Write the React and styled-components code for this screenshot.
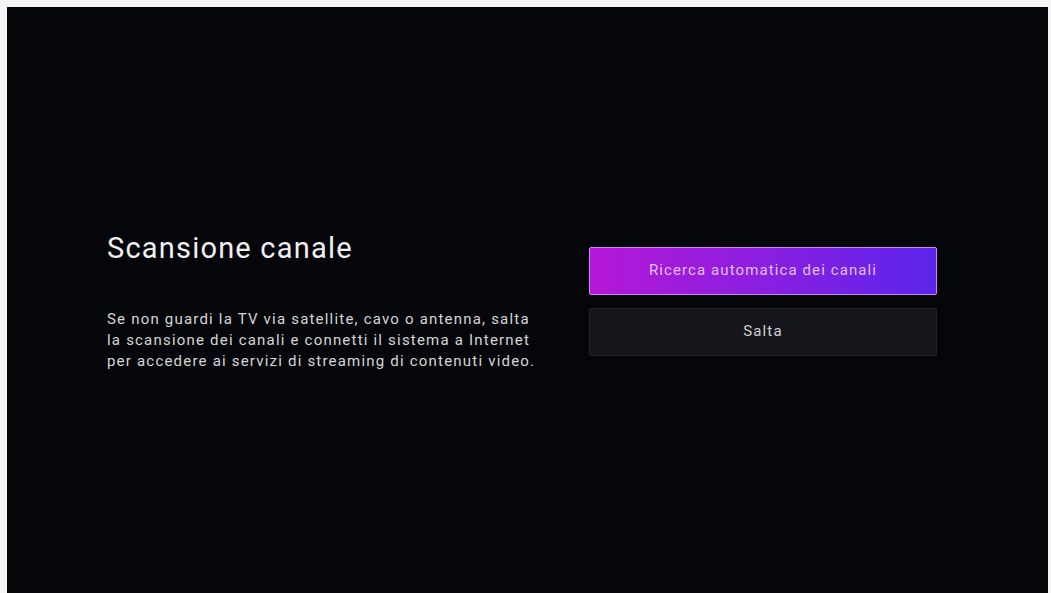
import React from "react";
import styled, { createGlobalStyle } from "styled-components";

const Global = createGlobalStyle`
  html, body { margin: 0; padding: 0; background: #ffffff; }
  body { font-family: Roboto, "Noto Sans", sans-serif; }
`;

const Frame = styled.div`
  width: 1051px;
  height: 593px;
  box-sizing: border-box;
  padding: 7px 3px 0 7px;
  background: #f4f4f4;
`;

const Screen = styled.div`
  height: 100%;
  background: #04060a;
  display: flex;
  align-items: center;
  padding: 0 0 0 100px;
  box-sizing: border-box;
`;

const Info = styled.div`
  width: 482px;
  display: flex;
  flex-direction: column;
  margin-top: 2px;
`;

const Title = styled.h1`
  margin: 0 0 44px 0;
  font-family: Roboto, sans-serif;
  font-weight: 400;
  font-size: 29px;
  line-height: 34px;
  letter-spacing: 1.2px;
  color: #f0f0f0;
`;

const Body = styled.p`
  margin: 0;
  font-family: Roboto, sans-serif;
  font-size: 15px;
  line-height: 21px;
  letter-spacing: 1.2px;
  white-space: nowrap;
  color: #d6d6d6;
`;

const Actions = styled.div`
  width: 348px;
  display: flex;
  flex-direction: column;
  gap: 13px;
  margin-top: 3px;
`;

const Button = styled.button`
  height: 48px;
  width: 100%;
  box-sizing: border-box;
  border-radius: 2px;
  font-family: Roboto, sans-serif;
  font-size: 15px;
  font-weight: 400;
  letter-spacing: 1.1px;
  cursor: pointer;
  border: 1px solid ${(p) => (p.$primary ? "#c98af0" : "#22242b")};
  background: ${(p) =>
    p.$primary
      ? "linear-gradient(90deg, #b517d6 0%, #8a1fe0 50%, #5b24ea 100%)"
      : "#14161c"};
  color: ${(p) => (p.$primary ? "#e3bff0" : "#d0d0d0")};
  padding: 0 0 2px 0;
`;

export default function App() {
  return (
    <>
      <Global />
      <Frame>
        <Screen>
          <Info>
            <Title>Scansione canale</Title>
            <Body>
              Se non guardi la TV via satellite, cavo o antenna, salta
              <br />
              la scansione dei canali e connetti il sistema a Internet
              <br />
              per accedere ai servizi di streaming di contenuti video.
            </Body>
          </Info>
          <Actions>
            <Button $primary>Ricerca automatica dei canali</Button>
            <Button>Salta</Button>
          </Actions>
        </Screen>
      </Frame>
    </>
  );
}
